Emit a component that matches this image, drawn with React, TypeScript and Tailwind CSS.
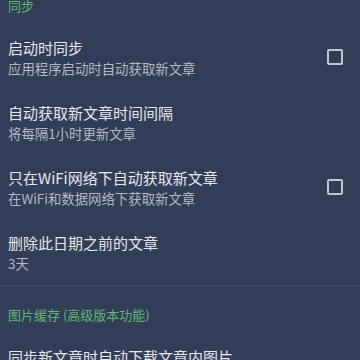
type Row = {
  title: string;
  summary: string;
  checkbox?: boolean;
};

const SYNC_ROWS: Row[] = [
  { title: "启动时同步", summary: "应用程序启动时自动获取新文章", checkbox: true },
  { title: "自动获取新文章时间间隔", summary: "将每隔1小时更新文章" },
  { title: "只在WiFi网络下自动获取新文章", summary: "在WiFi和数据网络下获取新文章", checkbox: true },
  { title: "删除此日期之前的文章", summary: "3天" },
];

function SectionHeader({ label }: { label: string }) {
  return (
    <div className="pt-[20px] pb-[10px] px-2 text-[13px] leading-[18px] text-[#62b677]">
      {label}
    </div>
  );
}

function PrefRow({ row }: { row: Row }) {
  return (
    <div className="flex items-center px-2 py-[12.5px]">
      <div className="flex-1 min-w-0">
        <p className="text-[15px] leading-[20px] text-[#e6e8ed]">{row.title}</p>
        <p className="text-[13.4px] leading-[20px] text-[#b4b9c3]">{row.summary}</p>
      </div>
      {row.checkbox && (
        <div className="mr-[9px] -mt-[2px] w-4 h-4 border-2 border-[#c2c6ce] rounded-[2px]" />
      )}
    </div>
  );
}

export default function App() {
  return (
    <div
      className="w-[360px] h-[360px] overflow-hidden bg-[#323e57]"
      style={{ fontFamily: '"Noto Sans CJK SC", "Noto Sans", sans-serif' }}
    >
      <div className="-mt-[23px]">
        <SectionHeader label="同步" />
        {SYNC_ROWS.map((r) => (
          <PrefRow key={r.title} row={r} />
        ))}
        <div className="h-px bg-[#43506a]" />
        <SectionHeader label="图片缓存 (高级版本功能)" />
        <PrefRow row={{ title: "同步新文章时自动下载文章内图片", summary: "仅在WiFi网络下" }} />
      </div>
    </div>
  );
}
